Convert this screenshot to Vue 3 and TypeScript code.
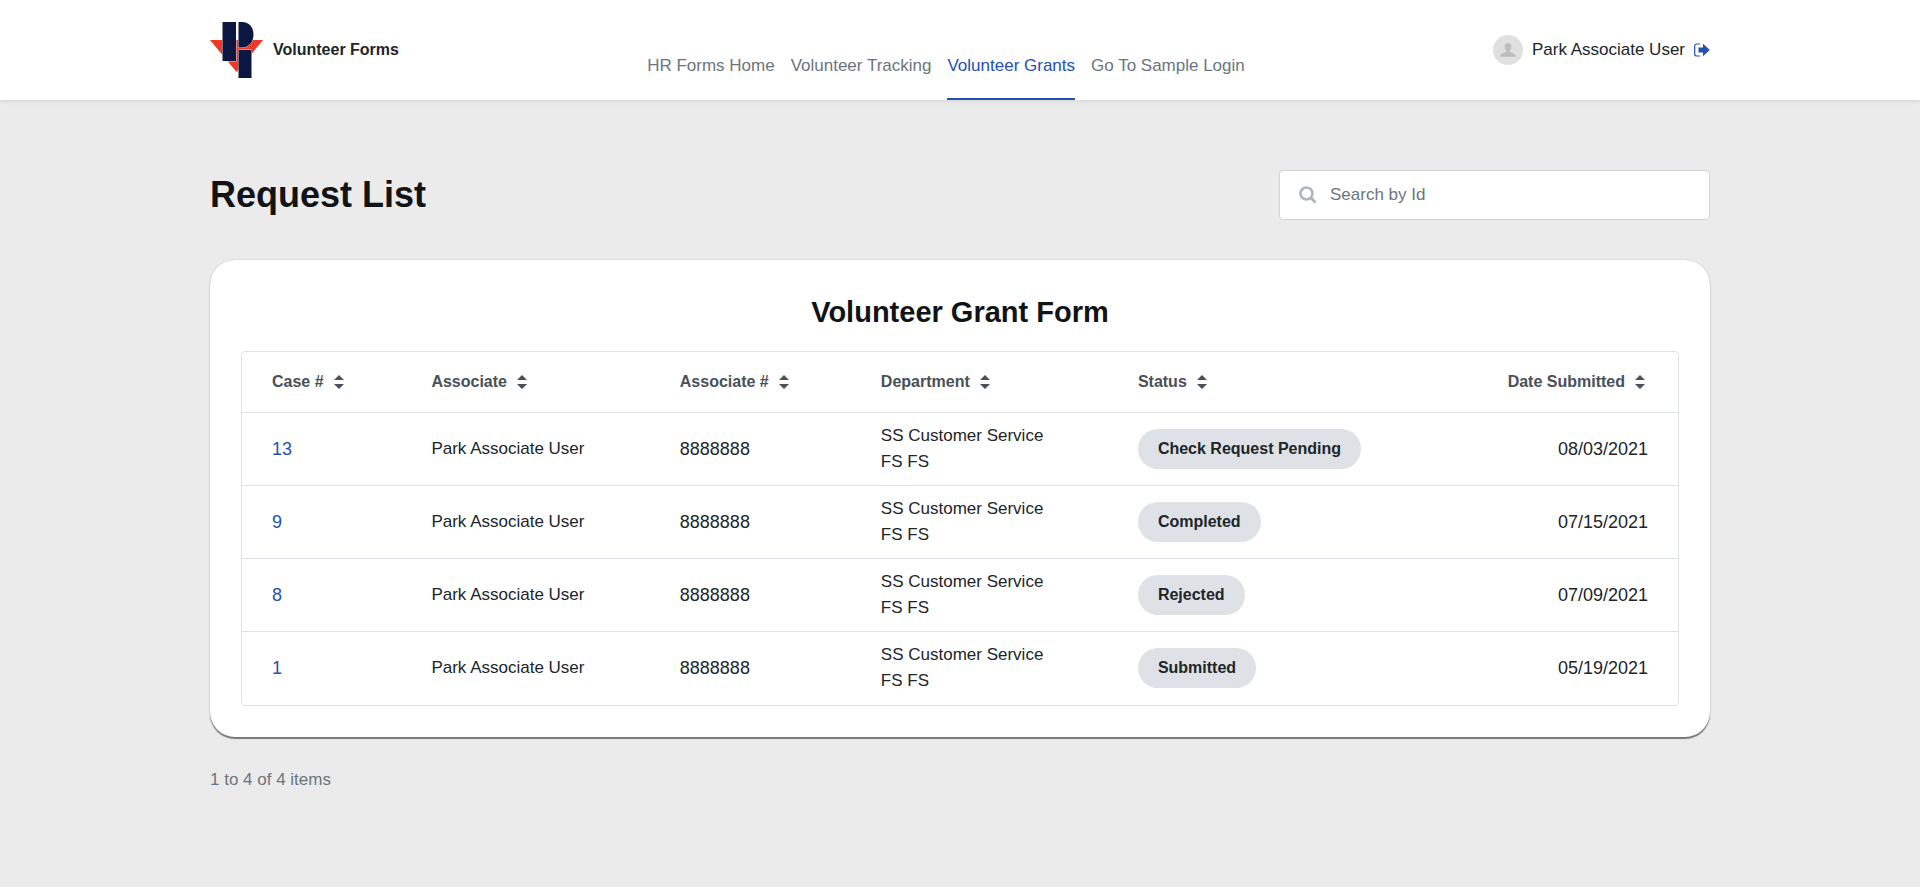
<script setup lang="ts">
import { computed, ref } from 'vue'

interface GrantRequest {
  id: number
  associate: string
  associateNumber: string
  department: string
  status: string
  submitted: string
}

type ColumnKey = keyof GrantRequest

const navItems: { label: string; active: boolean }[] = [
  { label: 'HR Forms Home', active: false },
  { label: 'Volunteer Tracking', active: false },
  { label: 'Volunteer Grants', active: true },
  { label: 'Go To Sample Login', active: false },
]

const columns: { key: ColumnKey; label: string }[] = [
  { key: 'id', label: 'Case #' },
  { key: 'associate', label: 'Associate' },
  { key: 'associateNumber', label: 'Associate #' },
  { key: 'department', label: 'Department' },
  { key: 'status', label: 'Status' },
  { key: 'submitted', label: 'Date Submitted' },
]

const makeRequest = (id: number, status: string, submitted: string): GrantRequest => ({
  id,
  associate: 'Park Associate User',
  associateNumber: '8888888',
  department: 'SS Customer Service FS FS',
  status,
  submitted,
})

const requests: GrantRequest[] = [
  makeRequest(13, 'Check Request Pending', '08/03/2021'),
  makeRequest(9, 'Completed', '07/15/2021'),
  makeRequest(8, 'Rejected', '07/09/2021'),
  makeRequest(1, 'Submitted', '05/19/2021'),
]

const search = ref('')
const sortKey = ref<ColumnKey>('id')
const ascending = ref(false)

const visible = computed(() =>
  requests
    .filter((r) => String(r.id).includes(search.value.trim()))
    .sort((a, b) => {
      const x = a[sortKey.value]
      const y = b[sortKey.value]
      const order = x < y ? -1 : x > y ? 1 : 0
      return ascending.value ? order : -order
    }),
)

function sortBy(key: ColumnKey) {
  ascending.value = sortKey.value === key ? !ascending.value : true
  sortKey.value = key
}
</script>

<template>
  <div class="page">
    <header class="topbar">
      <div class="container topbar-inner">
        <a class="brand" href="#">
          <svg class="logo" viewBox="0 0 53 56" aria-hidden="true">
            <path d="M0 18H53L26.500 50Z" fill="#ef3826" />
            <path
              d="M12.500 0H26V39H12.500ZM28.500 0H32C39 0 43.500 5 43.500 12.500C43.500 20 39 25.500 32 25.500H28.500ZM28.500 28H41.500V56H28.500Z"
              fill="#0b1740"
              stroke="#fff"
              stroke-width="0.800"
              paint-order="stroke"
            />
          </svg>
          <span>Volunteer Forms</span>
        </a>
        <nav class="nav" aria-label="Main">
          <a
            v-for="item in navItems"
            :key="item.label"
            href="#"
            class="nav-link"
            :class="{ active: item.active }"
            :aria-current="item.active ? 'page' : undefined"
            >{{ item.label }}</a
          >
        </nav>
        <div class="user">
          <svg class="avatar" viewBox="0 0 30 30" aria-hidden="true">
            <circle cx="15" cy="15" r="15" fill="#e0e0e0" />
            <path
              d="M15 8C17.200 8 18.400 9.500 18.400 11.500C18.400 13.500 17.600 15 16.700 15.800V17C19.500 18 22.600 18.500 22.900 21.800H7.100C7.400 18.500 10.500 18 13.300 17V15.800C12.400 15 11.600 13.500 11.600 11.500C11.600 9.500 12.800 8 15 8Z"
              fill="#bdbdbd"
            />
          </svg>
          <span>Park Associate User</span>
          <button class="logout" type="button" aria-label="Log out">
            <svg viewBox="0 0 16 14" aria-hidden="true">
              <path
                d="M6 1H3Q.700 1 .700 3.300V10.700Q.700 13 3 13H6"
                fill="none"
                stroke="#2450b2"
                stroke-width="1.200"
              />
              <path d="M4.500 4.500H9V.700L15.800 7L9 13.300V9.500H4.500Z" fill="#2450b2" />
            </svg>
          </button>
        </div>
      </div>
    </header>

    <main class="container">
      <div class="heading">
        <h1>Request List</h1>
        <label class="search">
          <svg viewBox="0 0 18 18" aria-hidden="true">
            <circle cx="7.500" cy="7.500" r="6" fill="none" stroke="#adb5bd" stroke-width="2.600" />
            <path d="M12 12L16.500 16.500" stroke="#adb5bd" stroke-width="3" />
          </svg>
          <input v-model="search" type="text" placeholder="Search by Id" aria-label="Search by Id" />
        </label>
      </div>

      <section class="card">
        <h2>Volunteer Grant Form</h2>
        <div class="table-frame">
          <table>
            <thead>
              <tr>
                <th v-for="col in columns" :key="col.key" scope="col" :class="col.key">
                  <button type="button" @click="sortBy(col.key)">
                    {{ col.label }}
                    <svg viewBox="0 0 10 14" aria-hidden="true">
                      <path d="M5 0L10 5H0ZM0 9H10L5 14Z" fill="#495057" />
                    </svg>
                  </button>
                </th>
              </tr>
            </thead>
            <tbody>
              <tr v-for="r in visible" :key="r.id">
                <td class="number"><a href="#">{{ r.id }}</a></td>
                <td>{{ r.associate }}</td>
                <td class="number">{{ r.associateNumber }}</td>
                <td class="department">{{ r.department }}</td>
                <td><span class="badge">{{ r.status }}</span></td>
                <td class="number submitted">{{ r.submitted }}</td>
              </tr>
            </tbody>
          </table>
        </div>
      </section>

      <p class="count">1 to {{ visible.length }} of {{ visible.length }} items</p>
    </main>
  </div>
</template>

<style>
body {
  margin: 0;
  background: #ebebeb;
}
</style>

<style scoped>
.page {
  min-height: 100vh;
  background: #ebebeb;
  color: #212529;
  font: 17px/26px 'Liberation Sans', Arial, sans-serif;
}

.page *,
.page *::before {
  box-sizing: border-box;
}

a {
  color: #2450b2;
  text-decoration: none;
}

button {
  padding: 0;
  border: 0;
  background: none;
  color: inherit;
  font: inherit;
  cursor: pointer;
}

svg {
  display: block;
  flex: none;
}

.container {
  max-width: 1500px;
  margin: 0 auto;
}

.topbar {
  background: #fff;
  box-shadow: 0 0 6px rgba(0, 0, 0, 0.14);
}

.topbar-inner {
  display: flex;
  align-items: center;
  justify-content: space-between;
  height: 100px;
}

.brand {
  display: flex;
  align-items: center;
  gap: 10px;
  color: #212529;
  font-size: 16px;
  font-weight: 700;
}

.logo {
  width: 53px;
  height: 56px;
}

.nav {
  display: flex;
  align-self: flex-end;
  gap: 16px;
}

.nav-link {
  padding-bottom: 19px;
  border-bottom: 2px solid transparent;
  color: #6c757d;
}

.nav-link.active {
  border-color: #2450b2;
  color: #2450b2;
}

.user {
  display: flex;
  align-items: center;
  gap: 9px;
}

.avatar {
  width: 30px;
  height: 30px;
}

.logout svg {
  width: 16px;
  height: 14px;
}

.heading {
  display: flex;
  align-items: center;
  justify-content: space-between;
  padding: 70px 0 40px;
}

h1,
h2,
.count {
  margin: 0;
}

h1 {
  color: #111315;
  font-size: 36px;
  line-height: 50px;
}

.search {
  display: flex;
  align-items: center;
  gap: 13px;
  width: 431px;
  height: 50px;
  padding: 0 19px;
  border: 1px solid #ced4da;
  border-radius: 4px;
  background: #fff;
}

.search svg {
  width: 18px;
  height: 18px;
}

.search input {
  flex: 1;
  min-width: 0;
  padding: 0;
  border: 0;
  outline: 0;
  background: none;
  color: #212529;
  font: inherit;
}

.search input::placeholder {
  color: #6c757d;
  opacity: 1;
}

.card {
  padding: 32px 31px 31px;
  border-radius: 25px;
  background: #fff;
  box-shadow:
    0 2px 1px #777,
    0 0 2px rgba(0, 0, 0, 0.2);
}

h2 {
  margin-bottom: 19px;
  color: #111315;
  font-size: 29px;
  line-height: 40px;
  text-align: center;
}

.table-frame {
  padding-bottom: 1px;
  border: 1px solid #dee2e6;
  border-radius: 4px;
}

table {
  width: 100%;
  border-collapse: collapse;
  table-layout: fixed;
}

th,
td {
  padding: 0 30px;
  text-align: left;
}

th {
  height: 60px;
  color: #495057;
  font-size: 16px;
}

th button {
  display: inline-flex;
  align-items: center;
  gap: 10px;
  padding-right: 3px;
  white-space: nowrap;
}

th svg {
  width: 10px;
  height: 14px;
}

th.id {
  width: 11.1%;
}

th.associate {
  width: 17.3%;
}

th.associateNumber {
  width: 14%;
}

th.department {
  width: 17.9%;
}

th.status {
  width: 24%;
}

td {
  height: 73px;
  border-top: 1px solid #dee2e6;
}

td.department {
  padding-right: 60px;
}

td.number {
  font-size: 18px;
}

th.submitted,
td.submitted {
  text-align: right;
}

.badge {
  display: inline-block;
  padding: 7px 20px;
  border-radius: 20px;
  background: #dee2e6;
  font-size: 16px;
  font-weight: 700;
  white-space: nowrap;
}

.count {
  padding-top: 30px;
  color: #6c757d;
}
</style>
